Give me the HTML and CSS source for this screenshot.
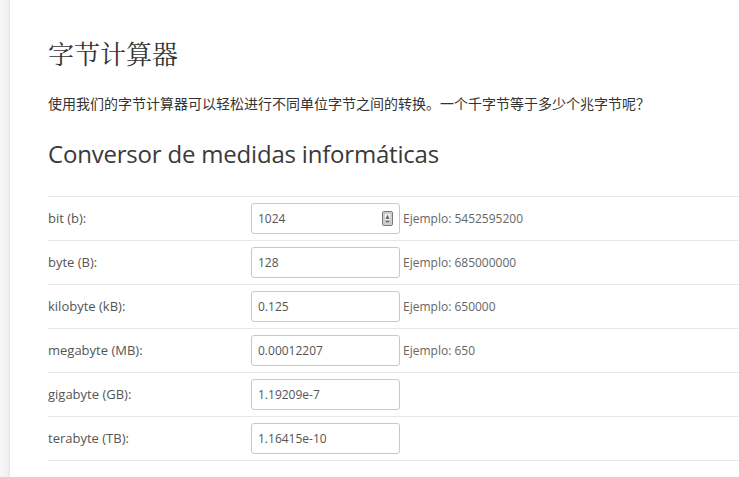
FILE: index.html
```html
<!DOCTYPE html>
<html lang="zh">
<head>
<meta charset="utf-8">
<link rel="stylesheet" href="styles.css">
</head>
<body>
<div class="page">
  <div class="side"></div>
  <main class="main">
    <h1 class="title">字节计算器</h1>
    <p class="intro">使用我们的字节计算器可以轻松进行不同单位字节之间的转换。一个千字节等于多少个兆字节呢？</p>
    <h2 class="subtitle">Conversor de medidas informáticas</h2>
    <table class="conv">
      <tr>
        <td class="lbl">bit (b):</td>
        <td class="fld">
          <span class="inwrap">
            <input class="inp" type="text" value="1024">
            <svg class="spin" width="11" height="15" viewBox="0 0 11 15"><rect x="0.5" y="0.5" width="10" height="14" rx="1.5" fill="#f4f4f4" stroke="#777"/><rect x="2" y="2" width="7" height="11" fill="none" stroke="#aaa"/><path d="M5.5 3.5 L7.5 8 L3.5 8 Z" fill="#666"/><rect x="3.5" y="9.5" width="4" height="2" fill="#666"/></svg>
          </span>
          <span class="ex">Ejemplo: 5452595200</span>
        </td>
      </tr>
      <tr>
        <td class="lbl">byte (B):</td>
        <td class="fld"><span class="inwrap"><input class="inp" type="text" value="128"></span><span class="ex">Ejemplo: 685000000</span></td>
      </tr>
      <tr>
        <td class="lbl">kilobyte (kB):</td>
        <td class="fld"><span class="inwrap"><input class="inp" type="text" value="0.125"></span><span class="ex">Ejemplo: 650000</span></td>
      </tr>
      <tr>
        <td class="lbl">megabyte (MB):</td>
        <td class="fld"><span class="inwrap"><input class="inp" type="text" value="0.00012207"></span><span class="ex">Ejemplo: 650</span></td>
      </tr>
      <tr>
        <td class="lbl">gigabyte (GB):</td>
        <td class="fld"><span class="inwrap"><input class="inp" type="text" value="1.19209e-7"></span></td>
      </tr>
      <tr>
        <td class="lbl">terabyte (TB):</td>
        <td class="fld"><span class="inwrap"><input class="inp" type="text" value="1.16415e-10"></span></td>
      </tr>
    </table>
  </main>
</div>
</body>
</html>
```

FILE: styles.css
```css
html, body {
  margin: 0;
  padding: 0;
  background: #fff;
}
.page {
  display: flex;
  min-height: 477px;
  overflow: hidden;
}
.side {
  flex: 0 0 10px;
  background: linear-gradient(to right, #f6f6f6 0%, #f1f1f1 70%, #e6e6e6 100%);
}
.main {
  flex: 1;
  padding-left: 38px;
  padding-top: 1px;
  min-width: 0;
}
.title {
  margin: 36px 0 0 0;
  font-family: "Noto Serif CJK SC", "Liberation Serif", "Noto Sans CJK SC", serif;
  font-weight: normal;
  font-size: 26px;
  line-height: 32px;
  color: #333;
}
.intro {
  margin: 24px 0 0 0;
  font-family: "Noto Sans CJK SC", sans-serif;
  font-size: 14px;
  line-height: 20px;
  color: #333;
  white-space: nowrap;
}
.subtitle {
  margin: 26px 0 0 0;
  font-family: "Open Sans", sans-serif;
  font-weight: normal;
  font-size: 24px;
  line-height: 30px;
  color: #3a3a3a;
  letter-spacing: -0.2px;
}
.conv {
  margin-top: 27px;
  width: 100%;
  border-collapse: collapse;
  font-family: "Open Sans", sans-serif;
  font-size: 12px;
  color: #555;
}
.conv tr {
  border-top: 1px solid #e8e8e8;
  border-bottom: 1px solid #e8e8e8;
}
.conv td {
  padding: 6px 0 7px 0;
  height: 30px;
  vertical-align: middle;
}
.lbl {
  width: 203px;
  font-size: 13px;
  color: #555;
}
.fld {
  display: flex;
  align-items: center;
}
.inwrap {
  position: relative;
  display: inline-block;
}
.inp {
  box-sizing: border-box;
  width: 149px;
  height: 31px;
  border: 1px solid #c8c8c8;
  border-radius: 3px;
  padding: 0 6px;
  font-family: "Open Sans", sans-serif;
  font-size: 12px;
  color: #555;
  background: #fff;
  outline: none;
  display: block;
}
.spin {
  position: absolute;
  right: 7px;
  top: 8px;
}
.ex {
  margin-left: 3px;
  color: #666;
}
```
